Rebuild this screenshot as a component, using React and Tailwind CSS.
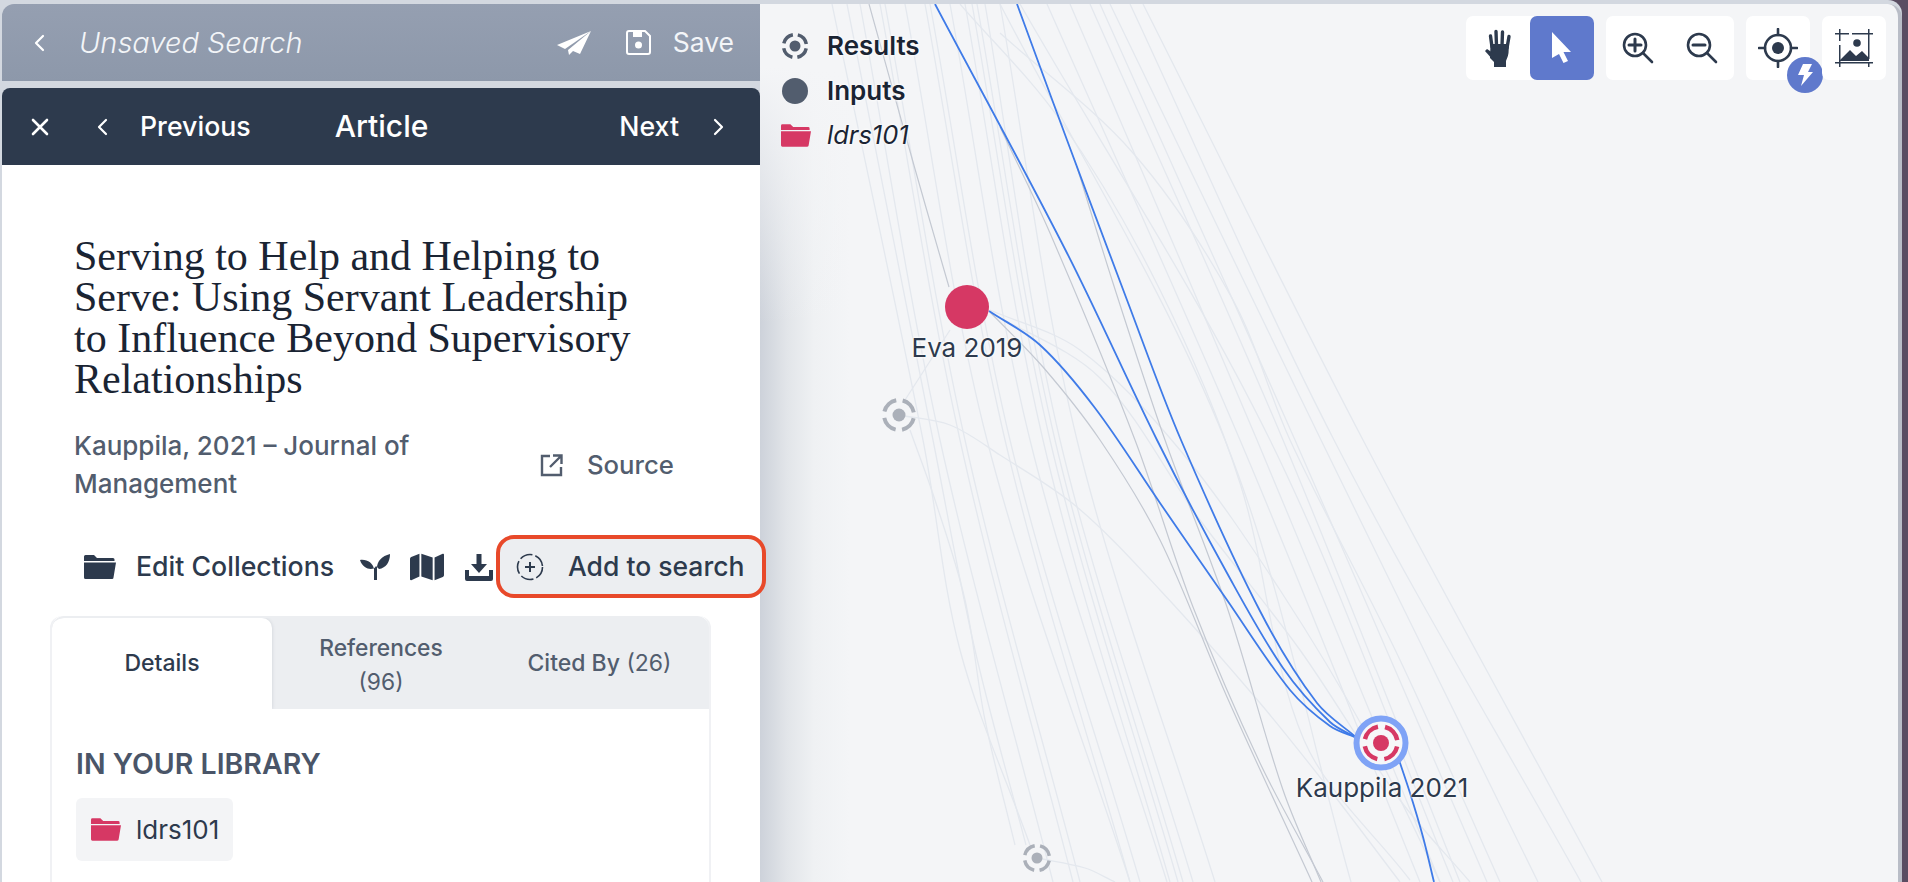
import React from "react";
import { FaMap } from "react-icons/fa";

function smooth(p) {
  const dist = (u, v) => Math.hypot(u[0] - v[0], u[1] - v[1]) || 1;
  let d = `M${p[0][0]} ${p[0][1]}`;
  for (let i = 0; i < p.length - 1; i++) {
    const a = p[Math.max(i - 1, 0)], b = p[i], c = p[i + 1], e = p[Math.min(i + 2, p.length - 1)];
    const l = dist(b, c);
    const k1 = l / (3 * (dist(a, b) + l));
    const k2 = l / (3 * (l + dist(c, e)));
    d += ` C${(b[0] + (c[0] - a[0]) * k1).toFixed(1)} ${(b[1] + (c[1] - a[1]) * k1).toFixed(1)} ${(c[0] - (e[0] - b[0]) * k2).toFixed(1)} ${(c[1] - (e[1] - b[1]) * k2).toFixed(1)} ${c[0]} ${c[1]}`;
  }
  return d;
}

const triple = (t, m, b) => [[t, 4], [m, 440], [b, 882]];

const light = [
  [[832, 4], [923, 440], [960, 650], [1030, 845]],
  [[847, 4], [933, 440], [975, 650], [1026, 845]],
  triple(860, 940, 1053), triple(880, 960, 1073), triple(885, 965, 1080),
  triple(905, 987, 1130), triple(925, 1005, 1130), triple(930, 1010, 1140),
  triple(950, 1030, 1167), triple(965, 1043, 1170), triple(972, 1050, 1178),
  triple(977, 1055, 1183), triple(985, 1060, 1193), triple(1000, 1077, 1215),
  triple(1047, 1240, 1420), triple(1070, 1257, 1440), triple(1090, 1283, 1460),
  triple(1100, 1295, 1487), triple(1110, 1321, 1538), triple(1130, 1334, 1581),
  triple(1143, 1363, 1602), triple(1000, 1225, 1351), triple(1020, 1270, 1453),
  [[1000, 33], [1133, 153], [1233, 300], [1290, 440], [1400, 660], [1500, 882]],
  [[960, 4], [1060, 120], [1160, 290], [1240, 483], [1304, 740], [1410, 880]],
  [[990, 312], [1100, 378], [1200, 520], [1300, 650], [1400, 800], [1470, 882]],
  [[990, 310], [1080, 350], [1180, 450], [1280, 590], [1370, 740], [1440, 882]],
  [[905, 400], [950, 330]],
  [[910, 430], [935, 500], [965, 600], [985, 720], [1015, 845]],
  [[1037, 858], [1085, 868], [1115, 882]],
  [[899, 415], [950, 425], [1000, 455], [1077, 507], [1160, 590], [1260, 703], [1330, 790], [1400, 882]],
];
const grey = [
  [[869, 4], [915, 169], [949, 287]],
  [[990, 312], [1043, 367], [1100, 440], [1160, 540], [1227, 697], [1312, 882]],
  [[1000, 127], [1050, 233], [1135, 440], [1193, 607], [1260, 763], [1323, 882]],
  [[1077, 167], [1113, 283], [1165, 440], [1227, 607], [1283, 790], [1321, 882]],
];
const blue = [
  [[1017, 4], [1067, 140], [1127, 300], [1181, 440], [1260, 611], [1317, 703], [1357, 738]],
  [[935, 4], [1067, 253], [1157, 440], [1227, 573], [1283, 668], [1330, 722], [1357, 738]],
  [[989, 311], [1040, 345], [1095, 408], [1160, 503], [1227, 600], [1290, 690], [1330, 726], [1357, 738]],
  [[1398, 757], [1410, 793], [1423, 837], [1434, 882]],
];

function ResultIcon({ cx, cy, r, color, dot, sw }) {
  const c = 2 * Math.PI * r;
  return (
    <>
      <circle cx={cx} cy={cy} r={r} fill="none" stroke={color} strokeWidth={sw} strokeDasharray={`${c / 4 - c * 0.07} ${c * 0.07}`} strokeDashoffset={-c * 0.035} />
      <circle cx={cx} cy={cy} r={dot} fill={color} />
    </>
  );
}

function Graph() {
  return (
    <svg className="absolute left-0 top-0" width="1148" height="882" viewBox="760 0 1148 882">
      {light.map((p, i) => <path key={i} d={smooth(p)} fill="none" stroke="#e4e8ee" strokeWidth="1.3" />)}
      {grey.map((p, i) => <path key={i} d={smooth(p)} fill="none" stroke="#c4c9d2" strokeWidth="1.2" />)}
      {blue.map((p, i) => <path key={i} d={smooth(p)} fill="none" stroke="#3f7be8" strokeWidth="1.8" />)}
      <circle cx="967" cy="307" r="22" fill="#d63864" />
      <ResultIcon cx={899} cy={415} r={15} color="#abb0b9" dot={6.5} sw={4} />
      <ResultIcon cx={1037} cy={858} r={12.5} color="#abb0b9" dot={5.5} sw={3.5} />
      <circle cx="1381" cy="743" r="24.5" fill="#f6f7f9" stroke="#7fa3f6" strokeWidth="6" />
      <ResultIcon cx={1381} cy={743} r={16.5} color="#d63864" dot={8} sw={4.5} />
    </svg>
  );
}

const Chevron = ({ dir = "left", color = "white" }) => (
  <svg width="12" height="18" viewBox="0 0 12 18" fill="none" stroke={color} strokeWidth="2.2" strokeLinecap="round" strokeLinejoin="round">
    <path d={dir === "left" ? "M10 2 L3 9 L10 16" : "M2 2 L9 9 L2 16"} />
  </svg>
);

const Folder = ({ color, w = 32, h = 24 }) => (
  <svg width={w} height={h} viewBox="0 0 32 24" fill={color}>
    <path d="M0 1.5 A1.5 1.5 0 0 1 1.5 0 H10 L13 3 H29 A1.5 1.5 0 0 1 30.5 4.5 V6 H0 Z" />
    <path d="M0 7.5 H32 L29.5 22.5 A1.5 1.5 0 0 1 28 24 H1.5 A1.5 1.5 0 0 1 0 22.5 Z" />
  </svg>
);

function LeftPanel() {
  return (
    <div className="w-[758px] shrink-0 flex flex-col relative z-10 ml-[2px]">
      <div className="h-[77px] rounded-tl-[12px] bg-[linear-gradient(180deg,#959fb1,#8d98aa)] flex items-center pl-[31px] pr-[26px] text-white">
        <Chevron />
        <span className="ml-[34px] text-[29px] italic font-light text-[#f3f5f8]">Unsaved Search</span>
        <svg className="ml-auto" width="34" height="24" viewBox="0 0 34 24" fill="white">
          <path d="M34 0 L0 14 L8 18 Z" />
          <path d="M34 0 L11 19 L12 24 L16 20 L23 23 Z" />
        </svg>
        <svg className="ml-[35px]" width="25" height="25" viewBox="0 0 25 25" fill="none" stroke="white" strokeWidth="2">
          <path d="M3 1 H19 L24 6 V22 A2 2 0 0 1 22 24 H3 A2 2 0 0 1 1 22 V3 A2 2 0 0 1 3 1 Z" />
          <rect x="7" y="1" width="9" height="6" fill="white" stroke="none" />
          <circle cx="12.5" cy="15" r="3.5" fill="white" stroke="none" />
        </svg>
        <span className="ml-[22px] text-[26.5px] font-normal text-[#f3f5f8]">Save</span>
      </div>
      <div className="h-[7px] bg-[#d3d8e0]" />
      <div className="h-[77px] rounded-t-[8px] bg-[#2d3a4d] flex items-center pl-[29px] pr-[35px] text-white relative">
        <svg width="18" height="18" viewBox="0 0 18 18" stroke="white" strokeWidth="2.6" strokeLinecap="round">
          <path d="M2 2 L16 16 M16 2 L2 16" />
        </svg>
        <span className="ml-[47px]"><Chevron /></span>
        <span className="ml-[32px] text-[26.7px] font-medium">Previous</span>
        <span className="ml-[84px] text-[30px] font-medium">Article</span>
        <span className="ml-auto text-[26.7px] font-medium">Next</span>
        <span className="ml-[34px]"><Chevron dir="right" /></span>
      </div>
      <div className="flex-1 min-h-0 bg-white flex flex-col pt-[71px]">
        <h1 className="pl-[72px] w-[650px] text-[42px] leading-[41px] text-[#1a2433] [font-family:'Liberation_Serif',serif]">
          Serving to Help and Helping to Serve: Using Servant Leadership to Influence Beyond Supervisory Relationships
        </h1>
        <div className="flex items-center pl-[72px] mt-[27px]">
          <p className="w-[401px] text-[26px] leading-[38px] font-medium text-[#525d6e]">Kauppila, 2021 – Journal of Management</p>
          <svg className="ml-[65px]" width="24" height="24" viewBox="0 0 24 24" fill="none" stroke="#525d6e" strokeWidth="2.4">
            <path d="M10 3 H2 V22 H21 V14" />
            <path d="M10 14 L21 3 M13 2.5 H21.5 V11" />
          </svg>
          <span className="ml-[23px] text-[25.7px] text-[#525d6e] font-medium">Source</span>
        </div>
        <div className="flex items-center pl-[82px] mt-[32px] h-[63px] relative">
          <Folder color="#2d3a4d" />
          <span className="ml-[20px] text-[26.7px] font-medium text-[#2d3a4d]">Edit Collections</span>
          <svg className="ml-[26px]" width="30" height="27" viewBox="0 0 30 27" fill="#2d3a4d">
            <path d="M0 7 C7 6 13 10 14 16 V27 H17 V15 C17 8 22 3 30 1 C30 9 26 15 19 16 L16 13 C14 18 3 17 0 7 Z" />
          </svg>
          <FaMap className="ml-[20px] text-[#2d3a4d]" size={34} />
          <svg className="ml-[21px]" width="28" height="28" viewBox="0 0 28 28" fill="#2d3a4d">
            <path d="M11.5 1 H16.5 V11 H22 L14 20 L6 11 H11.5 Z" />
            <path d="M0 17 H4 V23 H24 V17 H28 V26 A2 2 0 0 1 26 28 H2 A2 2 0 0 1 0 26 Z" />
          </svg>
          <div className="absolute left-[494px] top-0 w-[270px] h-[63px] rounded-[18px] border-[4px] border-[#e8492a] bg-[#eceef1] flex items-center pl-[16px]">
            <svg width="28" height="28" viewBox="0 0 28 28" fill="none" stroke="#2d3a4d">
              <circle cx="14" cy="14" r="12.5" strokeWidth="1.6" strokeDasharray="13 3" />
              <path d="M14 9 V19 M9 14 H19" strokeWidth="2" />
            </svg>
            <span className="ml-[24px] text-[26.5px] font-medium text-[#2d3a4d]">Add to search</span>
          </div>
        </div>
        <div className="ml-[48px] mt-[18px] w-[661px] flex-1 min-h-0 border-x-2 border-[#f0f1f4] rounded-t-[12px] flex flex-col">
          <div className="flex h-[93px] border-t-2 border-[#eceef1] rounded-t-[12px] overflow-hidden bg-[#eceef1]">
            <div className="w-[220px] bg-white rounded-t-[10px] flex items-center justify-center text-[23px] font-medium text-[#2d3a4d] shadow-[1px_0_3px_#d8dbe0]">Details</div>
            <div className="w-[218px] pt-[2px] flex flex-col items-center justify-center text-[22.8px] leading-[34px] text-[#525d6e]">
              <span className="font-medium">References</span>
              <span>(96)</span>
            </div>
            <div className="flex-1 flex items-center justify-center text-[23px] text-[#525d6e]">
              <span className="font-medium">Cited By</span>&nbsp;(26)
            </div>
          </div>
          <div className="pl-[24px] pt-[39px]">
            <div className="text-[28.5px] leading-[32px] font-semibold text-[#4a5568]">IN YOUR LIBRARY</div>
            <div className="mt-[18px] w-[157px] h-[63px] rounded-[6px] bg-[#f3f4f6] flex items-center pl-[15px]">
              <Folder color="#d63864" w={30} h={23} />
              <span className="ml-[15px] text-[26px] text-[#2d3a4d]">ldrs101</span>
            </div>
          </div>
        </div>
      </div>
    </div>
  );
}

const ToolGroup = ({ children, w = "w-[128px]" }) => (
  <div className={`${w} h-[64px] bg-white rounded-[7px] flex relative`}>{children}</div>
);
const ToolBtn = ({ children, active }) => (
  <div className={`w-[64px] h-[64px] flex items-center justify-center rounded-[7px] ${active ? "bg-[#5f79cc]" : ""}`}>{children}</div>
);

const Mag = ({ plus }) => (
  <svg width="32" height="32" viewBox="0 0 32 32" fill="none" stroke="#2d3a4d" strokeWidth="2.6" strokeLinecap="round">
    <circle cx="13" cy="13" r="11" />
    <path d="M21 21 L30 30" />
    <path d={plus ? "M7 13 H19 M13 7 V19" : "M7 13 H19"} strokeWidth="3" />
  </svg>
);

function Toolbar() {
  return (
    <div className="absolute right-[12px] top-[12px] flex gap-[12px]">
      <ToolGroup>
        <ToolBtn>
          <svg width="28" height="38" viewBox="0 0 28 38" fill="#2d3a4d">
            <g stroke="#2d3a4d" strokeWidth="3.4" strokeLinecap="round">
              <path d="M8 18 L6.5 7" />
              <path d="M12.5 17 L12 2.5" />
              <path d="M18 17 L18.5 3" />
              <path d="M23 19 L25 7.5" />
            </g>
            <path d="M6.5 15 H25 L24.5 24 C24 28 22.5 30 22 32 V38 H10 V33 L6 29 Z" />
            <path d="M9 31 L1 22 L3 20 L9 24 Z" />
          </svg>
        </ToolBtn>
        <ToolBtn active>
          <svg width="22" height="32" viewBox="0 0 22 32" fill="white"><path d="M1 0 L20 20 L12.5 20 L17 29 L12.5 31 L8 22 L1 26 Z" /></svg>
        </ToolBtn>
      </ToolGroup>
      <ToolGroup>
        <ToolBtn><Mag plus /></ToolBtn>
        <ToolBtn><Mag /></ToolBtn>
      </ToolGroup>
      <ToolGroup w="w-[64px]">
        <ToolBtn>
          <svg width="40" height="40" viewBox="0 0 40 40" fill="none" stroke="#2d3a4d" strokeWidth="2.6" strokeLinecap="round">
            <circle cx="20" cy="20" r="13" />
            <circle cx="20" cy="20" r="6" fill="#2d3a4d" stroke="none" />
            <path d="M20 1 V7 M20 33 V39 M1 20 H7 M33 20 H39" />
          </svg>
        </ToolBtn>
        <div className="absolute left-[41px] top-[41px] w-[36px] h-[36px] rounded-full bg-[#5f79cc] flex items-center justify-center">
          <svg width="16" height="22" viewBox="0 0 16 22" fill="white"><path d="M6 0 H15 L11 8 H16 L4 22 L7 11 H1 Z" /></svg>
        </div>
      </ToolGroup>
      <ToolGroup w="w-[64px]">
        <ToolBtn>
          <svg width="38" height="38" viewBox="0 0 38 38" fill="#2d3a4d" stroke="none">
            <path d="M0 4 H14 V5.5 H0 Z M17 4 H38 V5.5 H17 Z M4 0 H5.5 V12 H4 Z M33 0 H34.5 V30 H33 Z M0 33 H38 V34.5 H0 Z M4 16 H5.5 V38 H4 Z M33 33 H34.5 V38 H33 Z" />
            <circle cx="22" cy="14" r="3.8" />
            <path d="M4 32 L15 21 L21 27 L27 22 L34 29 V32 Z" />
          </svg>
        </ToolBtn>
      </ToolGroup>
    </div>
  );
}

const NodeLabel = ({ left, top, children }) => (
  <div className="absolute -translate-x-1/2 whitespace-nowrap text-[26px] leading-[30px] text-[#2d3a4d] [text-shadow:0_0_3px_white,0_0_3px_white]" style={{ left, top }}>{children}</div>
);

function Right() {
  return (
    <div className="relative flex-1 min-w-0 bg-[#f4f5f7] border-r-[4px] border-[#b9bdc7] rounded-tr-[14px] overflow-hidden">
      <div className="absolute left-0 top-0 bottom-0 w-[90px] bg-[linear-gradient(90deg,#cdd2da,#e2e5e9_30%,#eff1f3_60%,#f4f5f7)]" />
      <div className="absolute left-0 top-0 w-[90px] h-[320px] bg-[linear-gradient(180deg,#f4f5f7_20%,#f4f5f700)]" />
      <div className="absolute left-0 -top-[4px]"><Graph /></div>
      <NodeLabel left={207} top={329}>Eva 2019</NodeLabel>
      <NodeLabel left={622} top={769}>Kauppila 2021</NodeLabel>
      <div className="absolute left-[21px] top-[19px] flex flex-col text-[#1a2433] text-[26px] [text-shadow:0_0_3px_white,0_0_3px_white]">
        <div className="h-[45px] flex items-center gap-[18px]">
          <svg width="28" height="28" viewBox="0 0 28 28"><ResultIcon cx={14} cy={14} r={11.5} color="#525d6e" dot={5.5} sw={3.5} /></svg>
          <span className="font-semibold">Results</span>
        </div>
        <div className="h-[45px] flex items-center gap-[18px]">
          <svg width="28" height="28" viewBox="0 0 28 28"><circle cx="14" cy="14" r="13" fill="#525d6e" /></svg>
          <span className="font-semibold">Inputs</span>
        </div>
        <div className="h-[45px] flex items-center gap-[16px]">
          <Folder color="#d63864" w={30} h={23} />
          <span className="italic text-[25.5px]">ldrs101</span>
        </div>
      </div>
      <Toolbar />
    </div>
  );
}

export default function App() {
  return (
    <div className="w-[1908px] h-[882px] overflow-hidden bg-[#5a4d62] [font-family:Inter,sans-serif]">
      <div className="w-[1902px] h-[882px] bg-[#d3d8e0] rounded-tr-[14px] pt-[4px] flex">
        <LeftPanel />
        <Right />
      </div>
    </div>
  );
}
